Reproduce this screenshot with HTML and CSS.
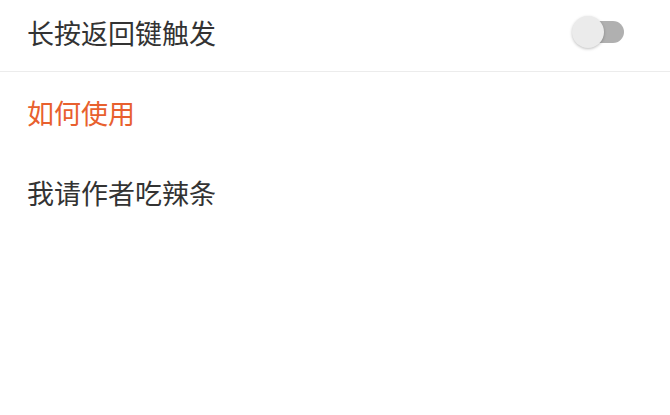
FILE: index.html
```html
<!DOCTYPE html>
<html lang="zh-CN">
<head>
<meta charset="utf-8">
<link rel="stylesheet" href="styles.css">
</head>
<body>
<div class="list">
  <div class="row row-first">
    <span class="label">长按返回键触发</span>
    <div class="switch"><div class="track"></div><div class="thumb"></div></div>
  </div>
  <div class="divider"></div>
  <div class="row"><span class="label accent">如何使用</span></div>
  <div class="row"><span class="label">我请作者吃辣条</span></div>
</div>
</body>
</html>
```
FILE: styles.css
```css
html, body {
  margin: 0;
  padding: 0;
  background: #ffffff;
}
body {
  width: 670px;
  height: 415px;
  overflow: hidden;
  font-family: "Noto Sans CJK SC", "Noto Sans", sans-serif;
}
.list {
  display: flex;
  flex-direction: column;
}
.row {
  height: 80px;
  display: flex;
  align-items: center;
  justify-content: space-between;
  padding: 0 46px 0 27px;
}
.row-first {
  height: 64px;
  padding-bottom: 7px;
}
.label {
  font-size: 27px;
  line-height: 1;
  color: #333333;
}
.accent {
  color: #e8602e;
}
.divider {
  height: 1px;
  background: #ececec;
}
.switch {
  position: relative;
  width: 52px;
  height: 32px;
}
.track {
  position: absolute;
  left: 4px;
  right: 0;
  top: 5px;
  height: 22px;
  border-radius: 11px;
  background: #b0b0b0;
}
.thumb {
  position: absolute;
  left: 0;
  top: 0;
  width: 32px;
  height: 32px;
  border-radius: 50%;
  background: #ebebeb;
  box-shadow: 0 1px 3px rgba(0,0,0,0.25);
}
```
